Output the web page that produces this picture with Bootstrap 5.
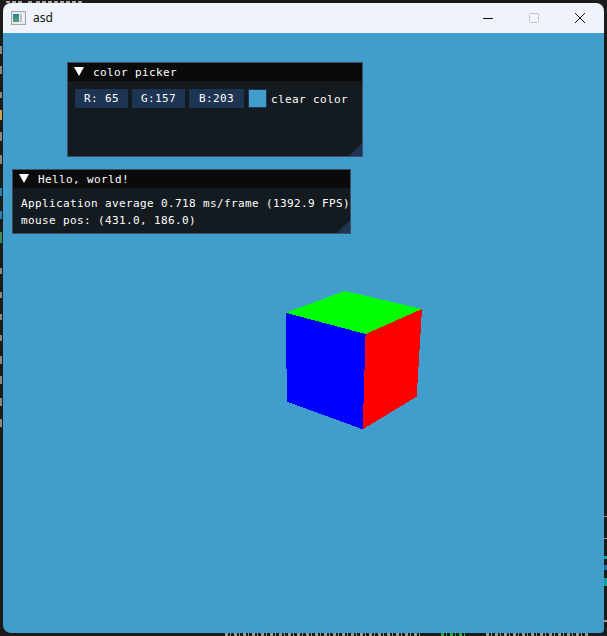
<!DOCTYPE html>
<html lang="en">
<head>
  <meta charset="UTF-8" />
  <meta name="viewport" content="width=device-width, initial-scale=1.0" />
  <title>asd</title>
  <link href="https://cdn.jsdelivr.net/npm/bootstrap@5.3.3/dist/css/bootstrap.min.css" rel="stylesheet" />
<style>
    body {
      background-color: #1b1b1b;
      margin: 0;
      height: 636px;
      overflow: hidden;
      padding: 3px;
    }

    /* bits of the terminal that peek out behind the window */
    .term-edges {
      position: absolute;
      left: 0;
      top: 0;
    }

    .app-window {
      position: relative;
      z-index: 1;
      height: 630px;
      border-radius: 8px 8px 4px 8px;
      overflow: hidden;
    }

    .app-titlebar {
      height: 30px;
      background-color: #eff3fb;
      color: #111;
      font-family: "Segoe UI", "Noto Sans", sans-serif;
      font-size: 12px;
      padding-right: 1px;
    }

    .app-icon {
      margin-left: 8px;
      margin-right: 7px;
    }

    .caption-btn {
      width: 46px;
    }

    .gl-canvas {
      background-color: #419dcb;
    }

    .gui-panel {
      position: absolute;
      background-color: #141b20;
      border: 1px solid #3f4f60;
      color: #fff;
      font-family: "DejaVu Sans Mono", monospace;
      font-size: 11px;
      letter-spacing: .38px;
      line-height: 17px;
      white-space: nowrap;
    }

    .panel-picker {
      left: 64px;
      top: 59px;
      width: 296px;
      height: 95px;
    }

    .panel-hello {
      left: 9px;
      top: 166px;
      width: 339px;
      height: 65px;
    }

    .panel-head {
      height: 18px;
      background-color: #0a0a0a;
      padding-left: 25px;
      padding-top: 1px;
    }

    .panel-arrow {
      position: absolute;
      left: 6px;
      top: 4px;
    }

    .panel-grip {
      position: absolute;
      right: 0;
      bottom: 0;
    }

    .picker-row {
      padding: 8px 0 0 7px;
      gap: 4px;
    }

    .num-box {
      height: 19px;
      line-height: 20px;
      background-color: #1d3552;
      text-align: center;
    }

    .color-swatch {
      width: 19px;
      height: 19px;
      background-color: #419dcb;
      border: 1px solid #1d3552;
    }

    .swatch-label {
      padding-top: 1px;
    }

    .hello-body {
      padding: 7px 0 0 8px;
    }

    .cube {
      position: absolute;
      left: 277px;
      top: 282px;
    }
  </style>
</head>
<body>

  <svg class="term-edges" width="607" height="636" viewBox="0 0 607 636" shape-rendering="crispEdges">
    <path d="M6 1.5H24M28 1.5H33M36 1.5H82" stroke="#a9a59a" stroke-width="2" stroke-dasharray="4 2" />
    <path d="M225 634.5H420M486 634.5H590" stroke="#a09a8c" stroke-width="3" stroke-dasharray="3 2 1 3" />
    <path d="M441 634.5H468" stroke="#2aa84a" stroke-width="3" stroke-dasharray="3 2 1 3" />
    <path d="M1 46V54M1 66V74M1 92V98M1 132V141M1 155V164M1 268V274M1 292V298M1 314V320M1 335V341M1 356V364M1 376V384M1 398V406M1 419V427" stroke="#8a877f" stroke-width="2" />
    <path d="M1 110V120" stroke="#c9a24a" stroke-width="2" />
    <path d="M1 188V196M1 211V219" stroke="#2b7fa8" stroke-width="2" />
    <path d="M1 232V243" stroke="#3c8a60" stroke-width="2" />
    <path d="M604 556H607V559H604ZM604 578H607V586H604Z" fill="#12a0a0" />
    <path d="M604 565H607V570H604Z" fill="#1c6ea0" />
    <path d="M604 516H607V517H604ZM604 538H607V539H604ZM604 620H607V622H604Z" fill="#a09a8c" />
  </svg>

  <div class="app-window d-flex flex-column">

    <!-- Title bar -->
    <div class="app-titlebar d-flex align-items-center flex-shrink-0">
      <svg class="app-icon" width="15" height="14" viewBox="0 0 15 14">
        <defs>
          <linearGradient id="paneFill" x1="0" y1="0" x2="0" y2="1">
            <stop offset="0" stop-color="#2f7f9a" />
            <stop offset="1" stop-color="#5f9e6a" />
          </linearGradient>
        </defs>
        <rect x=".5" y=".5" width="14" height="13" fill="#e6eaee" stroke="#a2a6aa" />
        <rect x="2" y="3" width="6" height="8" fill="url(#paneFill)" />
        <rect x="9" y="3" width="2" height="8" fill="#b9c6c4" />
        <rect x="11" y="3" width="2" height="8" fill="#f4f6f6" />
      </svg>
      <span class="flex-grow-1">asd</span>
      <div class="caption-btn d-flex justify-content-center">
        <svg width="10" height="10" viewBox="0 0 10 10"><path d="M0 5.5H10" stroke="#111" /></svg>
      </div>
      <div class="caption-btn d-flex justify-content-center">
        <svg width="10" height="10" viewBox="0 0 10 10"><rect x=".5" y=".5" width="9" height="9" rx="1" fill="none" stroke="#c4c6ca" /></svg>
      </div>
      <div class="caption-btn d-flex justify-content-center">
        <svg width="10" height="10" viewBox="0 0 10 10"><path d="M0 0L10 10M10 0L0 10" stroke="#111" /></svg>
      </div>
    </div>

    <!-- GL canvas -->
    <div class="gl-canvas flex-grow-1">

      <div class="gui-panel panel-picker">
        <div class="panel-head">
          <svg class="panel-arrow" width="10" height="9" viewBox="0 0 10 9"><path d="M0 0H10L5 9Z" fill="#fff" /></svg>
          color picker
        </div>
        <div class="picker-row d-flex align-items-center">
          <div class="num-box" style="width: 53px">R: 65</div>
          <div class="num-box" style="width: 53px">G:157</div>
          <div class="num-box" style="width: 55px">B:203</div>
          <div class="color-swatch"></div>
          <span class="swatch-label">clear color</span>
        </div>
        <svg class="panel-grip" width="13" height="13" viewBox="0 0 13 13"><path d="M13 0V13H0Z" fill="#1d3552" /></svg>
      </div>

      <div class="gui-panel panel-hello">
        <div class="panel-head">
          <svg class="panel-arrow" width="10" height="9" viewBox="0 0 10 9"><path d="M0 0H10L5 9Z" fill="#fff" /></svg>
          Hello, world!
        </div>
        <div class="hello-body">
          <div>Application average 0.718 ms/frame (1392.9 FPS)</div>
          <div>mouse pos: (431.0, 186.0)</div>
        </div>
        <svg class="panel-grip" width="13" height="13" viewBox="0 0 13 13"><path d="M13 0V13H0Z" fill="#1d3552" /></svg>
      </div>

      <!-- Cube, coordinates are page pixels -->
      <svg class="cube" width="145" height="145" viewBox="280 285 145 145" shape-rendering="crispEdges">
        <polygon points="345,291 422,309 365.6,334 285.7,312.7" fill="#00ff00" />
        <polygon points="285.7,312.7 365.6,334 362.7,429.3 287,401.7" fill="#0000ff" />
        <polygon points="365.6,334 422,309 416.7,396.7 362.7,429.3" fill="#ff0000" />
      </svg>
    </div>
  </div>

  <script src="https://cdn.jsdelivr.net/npm/bootstrap@5.3.3/dist/js/bootstrap.bundle.min.js"></script>
</body>
</html>
